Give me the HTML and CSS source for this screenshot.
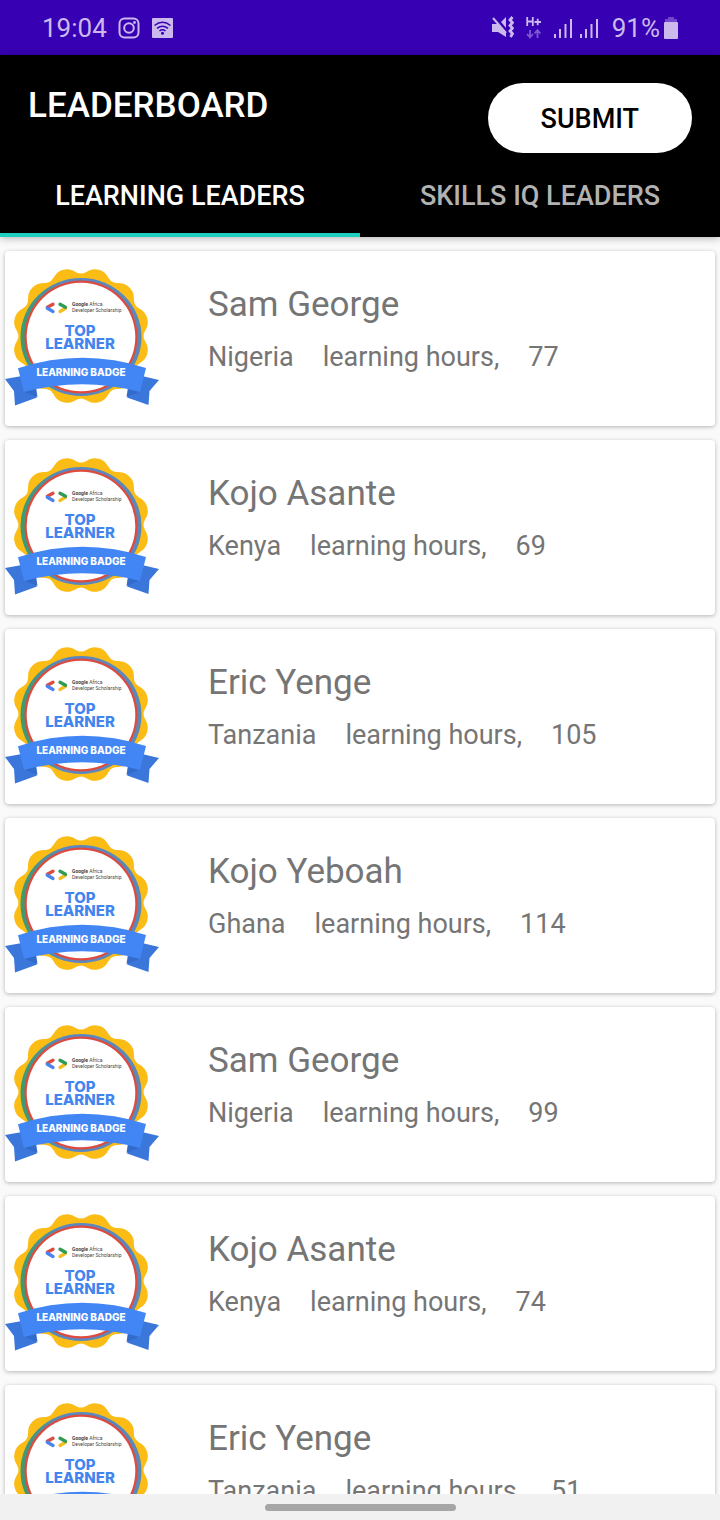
FILE: index.html
```html
<!DOCTYPE html>
<html lang="en">
<head>
<meta charset="utf-8">
<meta name="viewport" content="width=device-width, initial-scale=1">
<title>Leaderboard</title>
<link rel="stylesheet" href="styles.css">
</head>
<body>
<svg class="sprite" aria-hidden="true">
  <defs>
    <linearGradient id="ring" x1="0" y1="0" x2="1" y2="0">
      <stop offset="0" stop-color="#3c9c6c"/>
      <stop offset="0.12" stop-color="#479488"/>
      <stop offset="0.35" stop-color="#5a88c4"/>
      <stop offset="1" stop-color="#5a88b8"/>
    </linearGradient>
    <path id="lobe" d="M0 0L-16.4 -60.3C-10.6 -62 -9.5 -68.6 0 -68.6S10.6 -62 16.4 -60.3Z"/>
    <symbol id="badge" viewBox="5 265 155 143">
      <g transform="translate(81 336)" fill="#fbbc16">
        <circle r="62"/>
        <use href="#lobe" transform="rotate(15)"/><use href="#lobe" transform="rotate(45)"/>
        <use href="#lobe" transform="rotate(75)"/><use href="#lobe" transform="rotate(105)"/>
        <use href="#lobe" transform="rotate(135)"/><use href="#lobe" transform="rotate(165)"/>
        <use href="#lobe" transform="rotate(195)"/><use href="#lobe" transform="rotate(225)"/>
        <use href="#lobe" transform="rotate(255)"/><use href="#lobe" transform="rotate(285)"/>
        <use href="#lobe" transform="rotate(315)"/><use href="#lobe" transform="rotate(345)"/>
      </g>
      <ellipse cx="81" cy="337" rx="60.500" ry="59" fill="url(#ring)"/>
      <circle cx="81" cy="337" r="56.500" fill="#df4a3e"/>
      <circle cx="81" cy="337" r="54.300" fill="#fff"/>
      <g fill="none" stroke-width="3.300" stroke-linecap="round">
        <path d="M53 304.200L47.300 307.300" stroke="#dd4b40"/>
        <path d="M47.300 308.300L53 311.500" stroke="#4a83ee"/>
        <path d="M60 311.500L65.500 308.300" stroke="#f6bd22"/>
        <path d="M60 304.200L65.500 307.300" stroke="#2f9b55"/>
      </g>
      <text class="badge-org" x="72" y="306"><tspan class="badge-brand">Google</tspan> Africa</text>
      <text class="badge-org" x="72" y="312">Developer Scholarship</text>
      <text class="badge-title" x="80" y="336">TOP</text>
      <text class="badge-title" x="80" y="349">LEARNER</text>
      <path d="M5 379L22 376 37 397.500 15 405.500 14 391ZM159 380L142 376 127 397.500 148.500 405 149.500 391Z" fill="#3b76da"/>
      <path d="M24 391.500L36 387 37.500 397ZM140 391.500L128 387 126.500 397Z" fill="#336bca"/>
      <path d="M18 368.300Q82 347.500 146 368L140 392Q82 376.500 24 392Z" fill="#4286f5"/>
      <text class="badge-ribbon" x="81" y="376">LEARNING BADGE</text>
    </symbol>
  </defs>
</svg>

<div class="status">
  <div class="status-group">
    <span class="status-text">19:04</span>
    <svg class="app-icon" viewBox="0 0 22 22"><g fill="none" stroke="#cbb9ed" stroke-width="2"><rect x="1.500" y="1.500" width="19" height="19" rx="5"/><circle cx="11" cy="11" r="4.800"/></g><circle cx="16.500" cy="5.500" r="1.400" fill="#cbb9ed"/></svg>
    <svg class="app-icon" viewBox="0 0 22 22"><rect x="1" y="1" width="21" height="20" rx="1" fill="#cbb9ed"/><g fill="none" stroke="#3700b3" stroke-width="1.500"><path d="M3.500 8.500Q11.500 2 19.500 8.500M6 11.300Q11.500 7 17 11.300M8.500 14Q11.500 11.500 14.500 14"/></g><circle cx="11.500" cy="16.200" r="1.500" fill="#3700b3"/></svg>
  </div>
  <div class="status-group status-right">
    <svg class="mute" viewBox="0 0 22 24"><path d="M0 8H6L14 16V21L6 16H0Z" fill="#cbb9ed"/><path d="M9 6L14 1V12Z" fill="#cbb9ed"/><path d="M1 2L14 17" stroke="#cbb9ed" stroke-width="2"/><path d="M20.500 1L18 4l2.500 2.700L18 9.500l2.500 2.700L18 15l2.500 2.700L18.500 21" fill="none" stroke="#cbb9ed" stroke-width="2.800"/></svg>
    <svg class="data" viewBox="0 0 16 24"><path d="M1.200 1V10M6.800 1V10M1.200 5.500H6.800M8.500 6H15M11.700 2.800V9.200" fill="none" stroke="#cbb9ed" stroke-width="1.800"/><path d="M4 14V21M1 18L4 21.300 7 18M11.500 22V14.500M8.500 17.500L11.500 14.200 14.500 17.500" fill="none" stroke="#7f57d0" stroke-width="1.800"/></svg>
    <svg class="bars" viewBox="0 0 46 22"><path d="M0 17h2v4H0zM5 12h2v9H5zM10.500 7h2v14h-2zM16 2h2v19h-2zM26 17h2v4h-2zM31 12h2v9h-2zM36.500 7h2v14h-2zM42 2h2v19h-2z" fill="#cbb9ed"/></svg>
    <span class="status-text">91%</span>
    <svg class="battery" viewBox="0 0 14 22"><path d="M4 0h6v2h3v3H1V2h3z" fill="#7446cf"/><rect y="5" width="14" height="17" rx="1" fill="#cbb9ed"/></svg>
  </div>
</div>

<header class="app-bar">
  <div class="title-row">
    <h1 class="title">LEADERBOARD</h1>
    <button class="submit" type="button">SUBMIT</button>
  </div>
  <div class="tabs" role="tablist">
    <button class="tab tab-active" type="button" role="tab" aria-selected="true">LEARNING LEADERS</button>
    <button class="tab" type="button" role="tab" aria-selected="false">SKILLS IQ LEADERS</button>
  </div>
</header>

<main class="list-area">
  <ul class="list">
    <li class="card"><svg class="badge"><use href="#badge"/></svg><div class="info"><h2 class="name">Sam George</h2><p class="detail"><span>Nigeria</span><span>learning hours,</span><span>77</span></p></div></li>
    <li class="card"><svg class="badge"><use href="#badge"/></svg><div class="info"><h2 class="name">Kojo Asante</h2><p class="detail"><span>Kenya</span><span>learning hours,</span><span>69</span></p></div></li>
    <li class="card"><svg class="badge"><use href="#badge"/></svg><div class="info"><h2 class="name">Eric Yenge</h2><p class="detail"><span>Tanzania</span><span>learning hours,</span><span>105</span></p></div></li>
    <li class="card"><svg class="badge"><use href="#badge"/></svg><div class="info"><h2 class="name">Kojo Yeboah</h2><p class="detail"><span>Ghana</span><span>learning hours,</span><span>114</span></p></div></li>
    <li class="card"><svg class="badge"><use href="#badge"/></svg><div class="info"><h2 class="name">Sam George</h2><p class="detail"><span>Nigeria</span><span>learning hours,</span><span>99</span></p></div></li>
    <li class="card"><svg class="badge"><use href="#badge"/></svg><div class="info"><h2 class="name">Kojo Asante</h2><p class="detail"><span>Kenya</span><span>learning hours,</span><span>74</span></p></div></li>
    <li class="card"><svg class="badge"><use href="#badge"/></svg><div class="info"><h2 class="name">Eric Yenge</h2><p class="detail"><span>Tanzania</span><span>learning hours,</span><span>51</span></p></div></li>
  </ul>
</main>

<footer class="gesture-bar"><div class="handle"></div></footer>
</body>
</html>
```

FILE: styles.css
```css
* { box-sizing: border-box; }
body {
  margin: 0;
  height: 100vh;
  display: flex;
  flex-direction: column;
  overflow: hidden;
  background: #fafafa;
  color: #757575;
  font-family: Roboto, "Liberation Sans", sans-serif;
}
h1, h2, p, ul { margin: 0; padding: 0; }
button { border: 0; font-family: inherit; font-weight: 500; font-size: 27px; cursor: pointer; }
.sprite { position: absolute; width: 0; height: 0; }

.status {
  flex: none;
  display: flex;
  justify-content: space-between;
  align-items: center;
  height: 55px;
  padding: 0 42px;
  background: #3700b3;
  color: #cbb9ed;
}
.status-group { display: flex; align-items: center; gap: 11px; }
.status-right { gap: 12px; }
.status-text { font-size: 26px; line-height: 32px; }
.app-icon { width: 22px; height: 22px; }
.mute { width: 22px; height: 24px; }
.data { width: 16px; height: 24px; }
.bars { width: 46px; height: 22px; }
.battery { width: 14px; height: 22px; margin-left: -8px; }

.app-bar {
  flex: none;
  z-index: 1;
  padding-top: 28px;
  background: #000;
  color: #fff;
  box-shadow: 0 1px 8px rgba(0, 0, 0, 0.3);
}
.title-row {
  display: flex;
  justify-content: space-between;
  align-items: flex-start;
  padding: 0 28px;
}
.title { font-size: 35px; line-height: 46px; font-weight: 500; }
.submit { padding: 2px 53px 0; height: 70px; border-radius: 35px; background: #fff; color: #000; }
.tabs { display: grid; grid-template-columns: 1fr 1fr; }
.tab {
  height: 84px;
  padding: 6px 0 0;
  border-bottom: 4px solid transparent;
  background: none;
  color: #b2b2b2;
}
.tab-active { color: #fff; border-color: #1dcfbc; }

.list-area { flex: 1; min-height: 0; overflow: hidden; }
.list {
  display: flex;
  flex-direction: column;
  gap: 14px;
  padding: 14px 5px;
  list-style: none;
}
.card {
  flex: none;
  display: flex;
  gap: 48px;
  min-height: 175px;
  padding-top: 14px;
  border-radius: 4px;
  background: #fff;
  box-shadow: 0 1px 4px rgba(0, 0, 0, 0.28);
}
.badge { flex: none; width: 155px; height: 143px; }
.info { padding-top: 16px; }
.name { font-size: 35px; line-height: 48px; font-weight: 400; }
.detail { display: flex; gap: 29px; margin-top: 12px; font-size: 27px; line-height: 32px; }

.badge-title, .badge-ribbon { font-family: Inter, sans-serif; font-weight: 800; text-anchor: middle; }
.badge-title { font-size: 15px; fill: #4285ee; }
.badge-ribbon { font-size: 10px; fill: #fff; }
.badge-org { font-family: Roboto, sans-serif; font-size: 5px; fill: #444; }
.badge-brand { font-weight: 700; }

.gesture-bar {
  flex: none;
  display: flex;
  justify-content: center;
  align-items: center;
  height: 26px;
  background: #f1f1f1;
}
.handle { width: 191px; height: 7px; border-radius: 4px; background: #a6a6a6; }
```
